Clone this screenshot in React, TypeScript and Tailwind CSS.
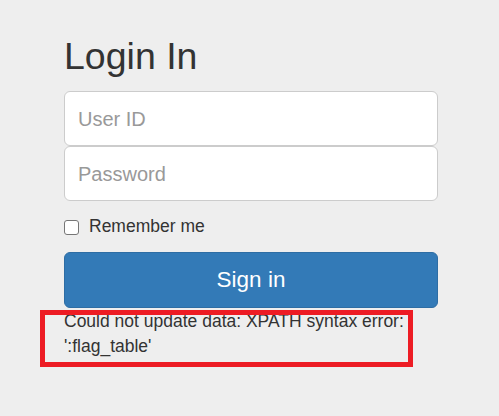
import React from "react";

export default function App() {
  return (
    <div
      className="relative w-[499px] h-[416px] bg-[#eeeeee] text-[#333333] overflow-hidden"
      style={{ fontFamily: '"Liberation Sans", Arial, Helvetica, sans-serif' }}
    >
      <div className="ml-[64px] w-[374px] pt-[36px] flex flex-col">
        <h1 className="text-[37.5px] leading-[41px] font-normal mb-[14px]">Login In</h1>
        <div className="h-[55px] bg-white border border-[#cccccc] rounded-[6px] flex items-center px-[13px]">
          <span className="text-[20px] text-[#999999]">User ID</span>
        </div>
        <div className="h-[55px] bg-white border border-[#cccccc] rounded-[6px] flex items-center px-[13px]">
          <span className="text-[20px] text-[#999999]">Password</span>
        </div>
        <label className="mt-[13px] h-[25px] flex items-center text-[17.5px] leading-[25px]">
          <span className="w-[15px] h-[15px] border border-[#767676] rounded-[3px] bg-white mr-[10px] mt-[1px]" />
          Remember me
        </label>
        <div className="mt-[13px] h-[56px] bg-[#337ab7] border border-[#2e6da4] rounded-[6px] flex items-center justify-center text-white text-[22.5px]">
          Sign in
        </div>
        <div className="mt-[1px] text-[17.5px] leading-[25px]">
          Could not update data: XPATH syntax error: ':flag_table'
        </div>
      </div>
      <div className="absolute left-[40px] top-[310px] w-[373px] h-[57px] border-[5px] border-[#ed1c24]" />
    </div>
  );
}
